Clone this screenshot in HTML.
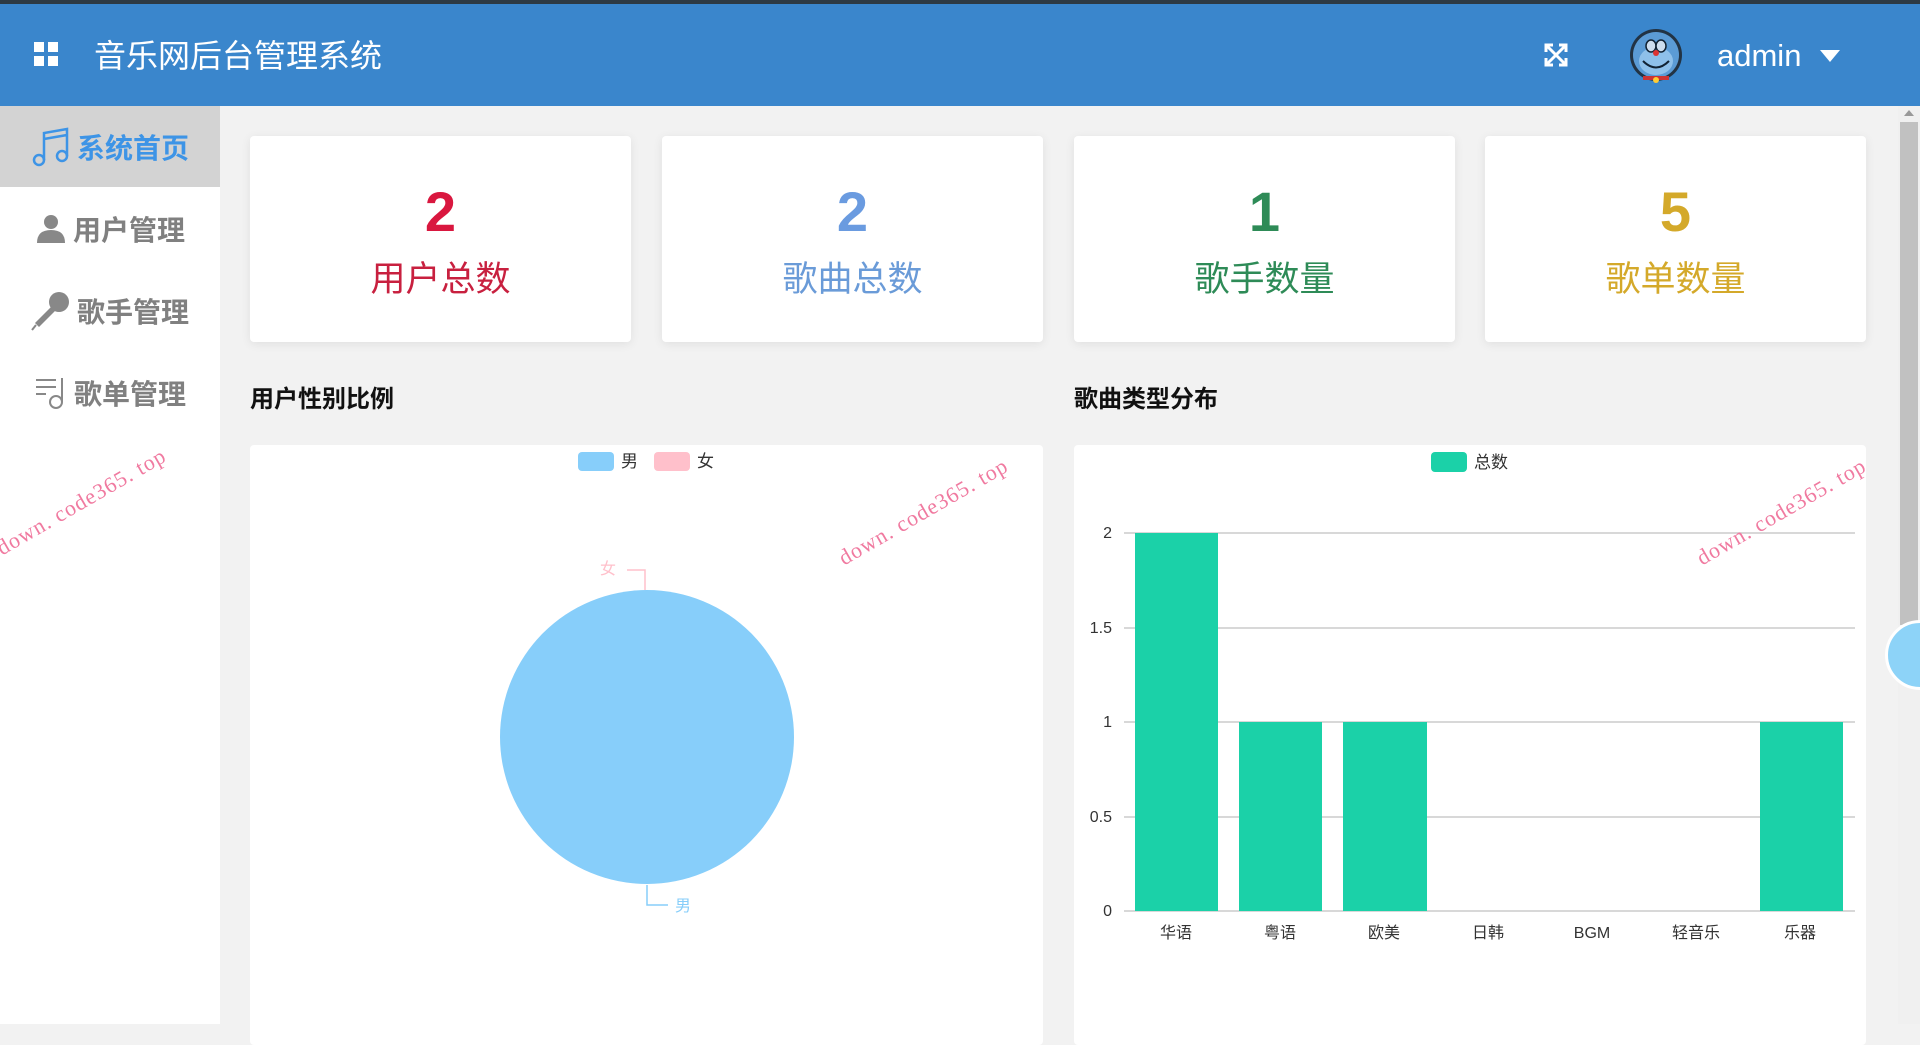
<!DOCTYPE html>
<html><head><meta charset="utf-8"><style>
*{margin:0;padding:0;box-sizing:border-box}
body{width:1920px;height:1024px;overflow:hidden;background:#f2f2f2;font-family:"Liberation Sans","Noto Sans CJK SC",sans-serif;position:relative}
.abs{position:absolute}
.hdr{left:0;top:0;width:1920px;height:106px;background:#3a86cc;border-top:4px solid #2d3a44}
.title{left:94px;top:36px;color:#fff;font-size:32px;line-height:40px}
.side{left:0;top:106px;width:220px;height:918px;background:#fff}
.item{position:absolute;left:0;width:220px;height:81px;display:flex;align-items:center;justify-content:center;font-size:28px;font-weight:bold;color:#808080;gap:6px}
.card{position:absolute;top:136px;width:381px;height:206px;background:#fff;border-radius:4px;box-shadow:0 2px 10px rgba(0,0,0,.08);text-align:center}
.num{position:absolute;left:0;width:100%;font-size:56px;font-weight:bold;line-height:70px}
.lbl{position:absolute;left:0;width:100%;font-size:35px;line-height:44px}
.sec{font-size:24px;font-weight:bold;color:#111;top:379px}
.panel{top:445px;height:600px;background:#fff;border-radius:4px}
.wm{color:#f07aa0;font-family:"Liberation Serif",serif;font-size:22px;transform:rotate(-30deg);transform-origin:left bottom;white-space:nowrap;letter-spacing:1px}
</style></head><body>
<div class="abs hdr"></div>
<svg class="abs" style="left:34px;top:42px" width="25" height="25"><rect x="0" y="0" width="10" height="10" fill="#fff"/><rect x="14" y="0" width="10" height="10" fill="#fff"/><rect x="0" y="14" width="10" height="10" fill="#fff"/><rect x="14" y="14" width="10" height="10" fill="#fff"/></svg>
<div class="abs title">音乐网后台管理系统</div>
<svg class="abs" style="left:1544px;top:43px" width="24" height="24" fill="none" stroke="#fff" stroke-width="3"><path d="M3 3L21 21M21 3L3 21"/><path d="M2 9V2H9M15 2H22V9M2 15V22H9M22 15V22H15" stroke-width="3"/></svg>
<svg class="abs" style="left:1628px;top:28px" width="56" height="56"><circle cx="28" cy="27" r="26" fill="#234" /><circle cx="28" cy="27" r="23" fill="#5b9bd5"/><ellipse cx="28" cy="33" rx="17" ry="14" fill="#8ec0ea"/><ellipse cx="23" cy="18" rx="5" ry="6" fill="#cde" stroke="#123" stroke-width="1.5"/><ellipse cx="33" cy="18" rx="5" ry="6" fill="#cde" stroke="#123" stroke-width="1.5"/><circle cx="28" cy="25" r="3" fill="#d33"/><path d="M15 33Q28 46 41 33" stroke="#123" stroke-width="2" fill="none"/><rect x="15" y="48" width="26" height="4" fill="#c33"/><circle cx="28" cy="52" r="3" fill="#fc3"/></svg>
<div class="abs" style="left:1717px;top:36px;color:#fff;font-size:31px;line-height:40px">admin</div>
<svg class="abs" style="left:1820px;top:50px" width="20" height="13"><path d="M0 0H20L10 12Z" fill="#fff"/></svg>

<div class="abs side">
<div class="item" style="top:0;background:#d3d3d3;color:#3d94e6"><svg width="40" height="40" fill="none" stroke="#3d94e6" stroke-width="2.5"><circle cx="8" cy="33" r="5"/><circle cx="31" cy="29" r="5"/><path d="M13 33V6L36 2V29M13 12L36 8"/></svg>系统首页</div>
<div class="item" style="top:82px"><svg width="32" height="32" fill="#888"><circle cx="16" cy="9" r="7"/><path d="M2 30Q2 17 16 17Q30 17 30 30Z"/></svg>用户管理</div>
<div class="item" style="top:164px"><svg width="40" height="40" fill="#888"><circle cx="28" cy="11" r="10"/><path d="M20 16L24 20L8 36L4 32Z"/><path d="M5 34L1 39" stroke="#888" stroke-width="2"/></svg>歌手管理</div>
<div class="item" style="top:246px"><svg width="34" height="34" fill="none" stroke="#888" stroke-width="2"><path d="M2 4H22M2 11H22M2 18H12M28 2V26"/><circle cx="22" cy="26" r="6"/></svg>歌单管理</div>
</div>

<div class="card" style="left:250px"><div class="num" style="top:41px;color:#d9173f">2</div><div class="lbl" style="top:122px;color:#c8203f">用户总数</div></div>
<div class="card" style="left:662px"><div class="num" style="top:41px;color:#6a9be0">2</div><div class="lbl" style="top:122px;color:#6a9bd8">歌曲总数</div></div>
<div class="card" style="left:1074px"><div class="num" style="top:41px;color:#2e8b57">1</div><div class="lbl" style="top:122px;color:#2e8b57">歌手数量</div></div>
<div class="card" style="left:1485px"><div class="num" style="top:41px;color:#d4a92a">5</div><div class="lbl" style="top:122px;color:#d4a92a">歌单数量</div></div>

<div class="abs sec" style="left:250px">用户性别比例</div>
<div class="abs sec" style="left:1074px">歌曲类型分布</div>

<div class="abs panel" style="left:250px;width:793px"></div>
<div class="abs panel" style="left:1074px;width:792px"></div>

<svg class="abs" style="left:0;top:0" width="1920" height="1024" font-family="Liberation Sans,Noto Sans CJK SC,sans-serif">
<rect x="578" y="452" width="36" height="19" rx="4" fill="#87cefa"/><text x="621" y="467" font-size="17" fill="#333">男</text>
<rect x="654" y="452" width="36" height="19" rx="4" fill="#ffc0cb"/><text x="697" y="467" font-size="17" fill="#333">女</text>
<circle cx="647" cy="737" r="147" fill="#87cefa"/>
<path d="M627 570H645V590" stroke="#ffc0cb" fill="none" stroke-width="1.5"/><text x="600" y="574" font-size="16" fill="#ffc0cb">女</text>
<path d="M647 885V905H668" stroke="#87cefa" fill="none" stroke-width="1.5"/><text x="675" y="911" font-size="16" fill="#87cefa">男</text>

<rect x="1431" y="452" width="36" height="20" rx="4" fill="#1bd1a8"/><text x="1474" y="468" font-size="17" fill="#333">总数</text>
<g stroke="#ccc" stroke-width="1.5"><path d="M1124 533H1855M1124 628H1855M1124 722H1855M1124 817H1855M1124 911H1855"/></g>
<g font-size="16" fill="#333" text-anchor="end"><text x="1112" y="538">2</text><text x="1112" y="633">1.5</text><text x="1112" y="727">1</text><text x="1112" y="822">0.5</text><text x="1112" y="916">0</text></g>
<g fill="#1bd1a8"><rect x="1135" y="533" width="83" height="378"/><rect x="1239" y="722" width="83" height="189"/><rect x="1343" y="722" width="84" height="189"/><rect x="1760" y="722" width="83" height="189"/></g>
<g font-size="16" fill="#333" text-anchor="middle"><text x="1176" y="938">华语</text><text x="1280" y="938">粤语</text><text x="1384" y="938">欧美</text><text x="1488" y="938">日韩</text><text x="1592" y="938">BGM</text><text x="1696" y="938">轻音乐</text><text x="1800" y="938">乐器</text></g>
</svg>

<div class="abs" style="left:1898px;top:106px;width:22px;height:918px;background:#f0f0f0"></div>
<div class="abs" style="left:1900px;top:122px;width:18px;height:503px;background:#c1c1c1"></div>
<svg class="abs" style="left:1900px;top:108px" width="18" height="10"><path d="M4 8L9 2L14 8Z" fill="#999"/></svg>
<div class="abs" style="left:1885px;top:620px;width:70px;height:70px;border-radius:50%;background:#8dd3f8;border:3px solid #fff"></div>

<div class="abs wm" style="left:5px;top:535px">down. code365. top</div>
<div class="abs wm" style="left:847px;top:545px">down. code365. top</div>
<div class="abs wm" style="left:1705px;top:545px">down. code365. top</div>
</body></html>
